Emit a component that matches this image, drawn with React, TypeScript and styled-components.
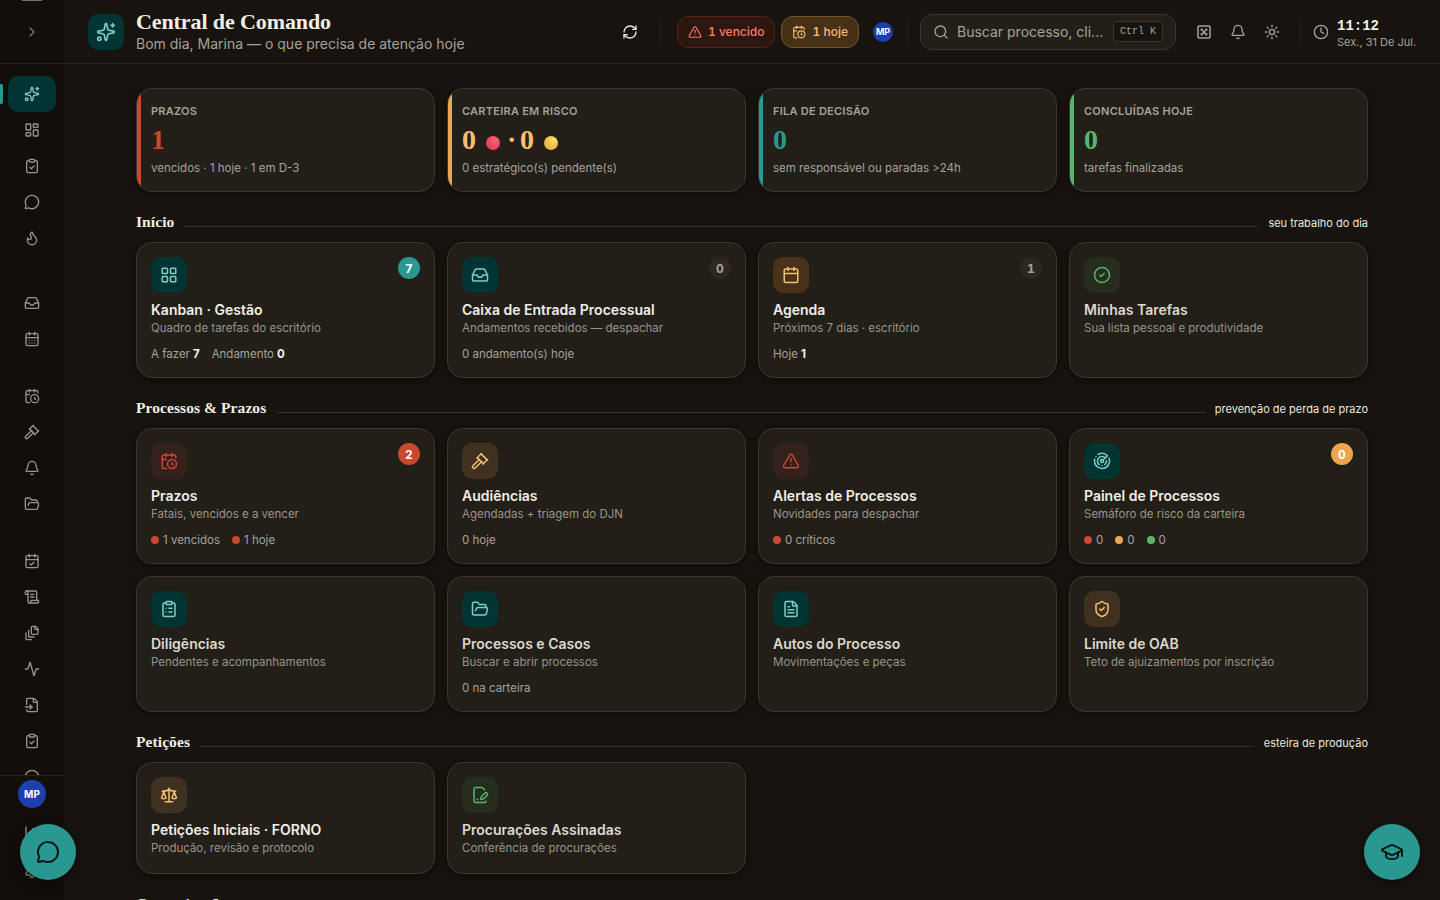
import React from 'react';
import styled, { createGlobalStyle } from 'styled-components';
import {
  Activity, Bell, Calendar, CalendarCheck, CalendarClock, CalendarDays, ChevronRight, Circle, CircleCheck,
  ClipboardCheck, ClipboardList, Clock, FileInput, FileText, Flame, FolderOpen, Gavel,
  GraduationCap, Inbox, LayoutDashboard, LayoutGrid, MessageCircle, Radar, RefreshCw, Scale, ScrollText,
  Search, ShieldCheck, Sparkles, Sun, TriangleAlert, ChartColumn, Settings, type LucideIcon,
} from 'lucide-react';

const GlobalStyle = createGlobalStyle`
  *, *::before, *::after { box-sizing: border-box; }
  html, body { margin: 0; height: 100%; overflow: hidden; background: #17130e; }
  body { font-family: Inter, "Liberation Sans", sans-serif; color: #ece8df; }
  button { font: inherit; color: inherit; border: 0; background: none; padding: 0; }
  svg { display: block; flex: none; }
`;

const serif = '"Liberation Serif", "Times New Roman", serif';
const mono = '"Liberation Mono", monospace';

type Tone = 'teal' | 'amber' | 'bronze' | 'red' | 'green';

const tones: Record<Tone, { bg: string; fg: string }> = {
  teal: { bg: '#023431', fg: '#7fcdc3' },
  amber: { bg: '#4a3218', fg: '#f3c078' },
  bronze: { bg: '#3f3020', fg: '#f3c078' },
  red: { bg: '#35211b', fg: '#cf4632' },
  green: { bg: '#262d1f', fg: '#57b56d' },
};

const Shell = styled.div`
  display: flex;
  height: 900px;
  overflow: hidden;
`;

const Sidebar = styled.aside`
  width: 64px;
  flex: none;
  display: flex;
  flex-direction: column;
  background: #120e09;
`;

const Collapse = styled.button`
  position: relative;
  height: 64px;
  flex: none;
  display: flex;
  align-items: center;
  justify-content: center;
  color: #807b72;
  border-bottom: 1px solid #272420;

  &::before {
    content: '';
    position: absolute;
    top: 0;
    left: 22px;
    width: 20px;
    height: 1px;
    background: #78736a;
  }
`;

const Nav = styled.nav`
  flex: 1;
  min-height: 0;
  overflow: hidden;
  padding: 12px 8px 0;
`;

const NavGroup = styled.div<{ $gap: number }>`
  padding-top: ${(p) => p.$gap}px;
`;

const NavItem = styled.a<{ $active?: boolean }>`
  position: relative;
  display: flex;
  align-items: center;
  justify-content: center;
  height: 36px;
  border-radius: 10px;
  background: ${(p) => (p.$active ? '#023431' : 'transparent')};
  color: ${(p) => (p.$active ? '#7fcdc3' : '#99948a')};

  &::before {
    content: '';
    display: ${(p) => (p.$active ? 'block' : 'none')};
    position: absolute;
    left: -8px;
    top: 8px;
    width: 3px;
    height: 20px;
    border-radius: 0 2px 2px 0;
    background: #2a9790;
  }
`;

const SideFoot = styled.div`
  height: 125px;
  flex: none;
  display: flex;
  flex-direction: column;
  align-items: center;
  padding-top: 4px;
  border-top: 1px solid #272420;
  color: #99948a;
`;

const FootIcon = styled.span`
  height: 38px;
  display: flex;
  align-items: center;
  &:first-of-type { margin-top: 6px; }
`;

const Avatar = styled.div<{ $size: number }>`
  display: flex;
  align-items: center;
  justify-content: center;
  flex: none;
  width: ${(p) => p.$size}px;
  height: ${(p) => p.$size}px;
  border-radius: 50%;
  background: #1f3fae;
  color: #fff;
  font-size: ${(p) => (p.$size > 24 ? 10 : 9)}px;
  font-weight: 700;
`;

const Page = styled.div`
  flex: 1;
  min-width: 0;
  display: flex;
  flex-direction: column;
  background: #17130e;
`;

const Header = styled.header`
  height: 64px;
  flex: none;
  display: flex;
  align-items: center;
  padding: 0 24px;
  border-bottom: 1px solid #272420;
`;

const IconTile = styled.div<{ $tone: Tone }>`
  width: 36px;
  height: 36px;
  flex: none;
  display: flex;
  align-items: center;
  justify-content: center;
  border-radius: 10px;
  background: ${(p) => tones[p.$tone].bg};
  color: ${(p) => tones[p.$tone].fg};
`;

const Heading = styled.div`
  flex: 1;
  margin-left: 12px;
  padding-top: 2px;
  white-space: nowrap;
`;

const Title = styled.h1`
  margin: 0;
  font: 700 22px/22px ${serif};
  letter-spacing: -0.1px;
  color: #f2eee6;
`;

const Greeting = styled.p`
  margin: 0;
  padding-top: 1px;
  font-size: 14px;
  line-height: 20px;
  color: #a8a296;
`;

const Divider = styled.span`
  width: 1px;
  height: 24px;
  background: #272420;
`;

const Refresh = styled.button`
  display: flex;
  margin-right: 22px;
`;

const Alert = styled.div<{ $kind: 'late' | 'today' }>`
  display: flex;
  align-items: center;
  gap: 6px;
  height: 32px;
  padding: 0 10px;
  border-radius: 12px;
  font-size: 12px;
  font-weight: 500;
  border: 1px solid ${(p) => (p.$kind === 'late' ? '#5c2219' : '#775427')};
  background: ${(p) => (p.$kind === 'late' ? '#2c1610' : '#473116')};
  color: ${(p) => (p.$kind === 'late' ? '#fb7a61' : '#ecbb76')};
  b { font-weight: 600; font-variant-numeric: tabular-nums; }
`;

const Alerts = styled.div`
  display: flex;
  gap: 6px;
  margin: 0 14px 0 16px;
`;

const Account = styled.div`
  margin-right: 14px;
`;

const SearchBox = styled.div`
  display: flex;
  align-items: center;
  width: 256px;
  height: 36px;
  margin: 0 20px 0 12px;
  padding: 0 12px;
  border: 1px solid #3a3731;
  border-radius: 12px;
  background: #221f19;
  color: #a8a296;
  font-size: 14px;
  span { flex: 1; margin-left: 8px; white-space: nowrap; }
`;

const Key = styled.kbd`
  display: flex;
  align-items: center;
  justify-content: center;
  width: 50px;
  height: 21px;
  border: 1px solid #3a3731;
  border-radius: 4px;
  background: #17130e;
  font: 500 10px/1 ${mono};
`;

const Tools = styled.div`
  display: flex;
  gap: 18px;
  margin-right: 20px;
  color: #a8a296;
`;

const ClockBox = styled.div`
  display: flex;
  align-items: center;
  gap: 8px;
  margin-left: 12px;
  color: #a8a296;
  font-size: 11px;
  line-height: 14px;
`;

const Time = styled.div`
  padding: 4px 0 1px;
  font: 700 14px/16px ${mono};
  color: #f5f2ea;
`;

const DateText = styled.div`
  width: 79px;
  white-space: nowrap;
`;

const Content = styled.main`
  flex: 1;
  min-height: 0;
  overflow: hidden;
  padding: 24px 72px 0;
`;

const Grid = styled.div`
  display: grid;
  grid-template-columns: repeat(4, 1fr);
  gap: 12px;
`;

const Panel = styled.article`
  position: relative;
  padding: 14px;
  border: 1px solid #3a3731;
  border-radius: 16px;
  background: #221f19;
  box-shadow: 0 2px 8px rgba(0, 0, 0, 0.45);
`;

const Kpi = styled(Panel)<{ $color: string }>`
  height: 104px;
  overflow: hidden;
  padding-top: 15px;

  &::before {
    content: '';
    position: absolute;
    inset: 0 auto 0 0;
    width: 4px;
    background: ${(p) => p.$color};
  }
`;

const KpiLabel = styled.div`
  font-size: 11px;
  line-height: 14px;
  font-weight: 600;
  letter-spacing: 0.25px;
  color: #a8a296;
`;

const KpiValue = styled.div<{ $color: string }>`
  display: flex;
  align-items: baseline;
  height: 30px;
  margin-top: 5px;
  font: 700 28px/34px ${serif};
  white-space: pre;
  color: ${(p) => p.$color};
`;

const KpiNote = styled.div`
  margin-top: 7px;
  font-size: 11.5px;
  line-height: 17px;
  color: #a8a296;
`;

const Orb = styled.i<{ $from: string; $to: string }>`
  width: 14px;
  height: 14px;
  margin: 0 7px 0 10px;
  transform: translateY(1px);
  border-radius: 50%;
  background: radial-gradient(circle at 68% 28%, ${(p) => p.$from}, ${(p) => p.$to});
`;

const Separator = styled.span`
  width: 13px;
`;

const SectionHead = styled.div`
  display: flex;
  align-items: baseline;
  gap: 10px;
  height: 18px;
  margin: 19px 0 13px;
`;

const SectionTitle = styled.h2`
  margin: 0;
  font: 700 15.5px/22px ${serif};
  letter-spacing: 0.08px;
  color: #f2eee6;
`;

const Rule = styled.span`
  flex: 1;
  height: 1px;
  background: #33302a;
`;

const SectionNote = styled.span`
  font-size: 11px;
  color: #ece8df;
`;

const Card = styled(Panel)<{ $h: number; $dim?: boolean }>`
  height: ${(p) => p.$h}px;
  color: ${(p) => (p.$dim ? '#dcd8cf' : '#f2eee6')};
`;

const CardTitle = styled.h3`
  margin: 8px 0 0;
  font-size: 14px;
  line-height: 18px;
  font-weight: 600;
`;

const CardText = styled.p`
  margin: 0;
  font-size: 11.5px;
  line-height: 18px;
  color: #9a9488;
`;

const Stats = styled.div`
  display: flex;
  gap: 12px;
  margin-top: 8px;
  font-size: 11.5px;
  line-height: 18px;
  color: #a8a296;
`;

const Stat = styled.span`
  display: flex;
  align-items: center;
  b { margin-left: 3px; font-weight: 700; color: #f5f2ea; }
`;

const Dot = styled.i<{ $color: string }>`
  width: 8px;
  height: 8px;
  margin-right: 4px;
  border-radius: 50%;
  background: ${(p) => p.$color};
`;

const Badge = styled.span<{ $bg: string; $fg: string }>`
  position: absolute;
  top: 14px;
  right: 14px;
  width: 22px;
  height: 22px;
  border-radius: 11px;
  display: flex;
  align-items: center;
  justify-content: center;
  font-size: 12px;
  font-weight: 700;
  font-variant-numeric: tabular-nums;
  background: ${(p) => p.$bg};
  color: ${(p) => p.$fg};
`;

const Fab = styled.button<{ $side: 'left' | 'right' }>`
  position: fixed;
  bottom: 20px;
  ${(p) => p.$side}: 20px;
  width: 56px;
  height: 56px;
  border-radius: 50%;
  display: flex;
  align-items: center;
  justify-content: center;
  background: #2a9790;
  color: #0d1513;
  box-shadow: 0 4px 12px rgba(0, 0, 0, 0.4);
`;

const RED = '#cb4730';
const AMBER = '#eea64e';
const GREEN = '#57b56d';
const TEAL = '#2a9790';

type GlyphProps = { size?: number; strokeWidth?: number };

const Fullscreen = ({ size = 16 }: GlyphProps) => (
  <svg width={size} height={size} viewBox="0 0 16 16" fill="none" stroke="currentColor" strokeWidth="1.5" strokeLinecap="round" strokeLinejoin="round">
    <rect x="2" y="2" width="12" height="12" rx="1" />
    <path strokeWidth="1.4" d="m5.6 5.6 4.8 4.8M10.4 5.6l-4.8 4.8" />
    <path strokeWidth="0.9" d="M5 6.4V5h1.4M9.6 5H11v1.4M11 9.6V11H9.6M6.4 11H5V9.6" />
  </svg>
);

const Documents = ({ size = 16, strokeWidth = 2 }: GlyphProps) => (
  <svg width={size} height={size} viewBox="0 0 24 24" fill="none" stroke="currentColor" strokeWidth={strokeWidth} strokeLinecap="round" strokeLinejoin="round">
    <path d="M21 7h-3a2 2 0 0 1-2-2V2" />
    <path d="M21 6v6.5c0 .8-.7 1.5-1.5 1.5h-7c-.8 0-1.5-.7-1.5-1.5v-9c0-.8.7-1.5 1.5-1.5H17Z" />
    <path d="M7 8v8.8c0 .3.2.6.4.8.2.2.5.4.8.4H15" />
    <path d="M3 12v8.8c0 .3.2.6.4.8.2.2.5.4.8.4H11" />
  </svg>
);

const Signed = ({ size = 18 }: GlyphProps) => (
  <svg width={size} height={size} viewBox="0 0 24 24" fill="none" stroke="currentColor" strokeWidth="2" strokeLinecap="round" strokeLinejoin="round">
    <path d="m18 5-2.414-2.414A2 2 0 0 0 14.172 2H6a2 2 0 0 0-2 2v16a2 2 0 0 0 2 2h12a2 2 0 0 0 2-2" />
    <path d="M21.378 12.626a1 1 0 0 0-3.004-3.004l-4.01 4.012a2 2 0 0 0-.506.854l-.837 2.87a.5.5 0 0 0 .62.62l2.87-.837a2 2 0 0 0 .854-.506z" />
    <path d="M8 18h1" />
  </svg>
);

type Glyph = LucideIcon | React.FC<GlyphProps>;
type StatData = { label?: string; value?: string; dot?: string };
type CardData = {
  icon: Glyph; tone: Tone; title: string; text: string;
  stats?: StatData[]; badge?: { n: number; bg: string; fg: string }; dim?: boolean;
};

const muted = { bg: '#2b2823', fg: '#a8a296' };

const sections: { title: string; note: string; h: number; cards: CardData[] }[] = [
  {
    title: 'Início', note: 'seu trabalho do dia', h: 136,
    cards: [
      { icon: LayoutGrid, tone: 'teal', title: 'Kanban · Gestão', text: 'Quadro de tarefas do escritório', stats: [{ label: 'A fazer', value: '7' }, { label: 'Andamento', value: '0' }], badge: { n: 7, bg: TEAL, fg: '#fff' } },
      { icon: Inbox, tone: 'teal', title: 'Caixa de Entrada Processual', text: 'Andamentos recebidos — despachar', stats: [{ label: '0 andamento(s) hoje' }], badge: { n: 0, ...muted } },
      { icon: Calendar, tone: 'amber', title: 'Agenda', text: 'Próximos 7 dias · escritório', stats: [{ label: 'Hoje', value: '1' }], badge: { n: 1, ...muted } },
      { icon: CircleCheck, tone: 'green', title: 'Minhas Tarefas', text: 'Sua lista pessoal e produtividade', dim: true },
    ],
  },
  {
    title: 'Processos & Prazos', note: 'prevenção de perda de prazo', h: 136,
    cards: [
      { icon: CalendarClock, tone: 'red', title: 'Prazos', text: 'Fatais, vencidos e a vencer', stats: [{ dot: RED, label: '1 vencidos' }, { dot: RED, label: '1 hoje' }], badge: { n: 2, bg: RED, fg: '#fff' } },
      { icon: Gavel, tone: 'bronze', title: 'Audiências', text: 'Agendadas + triagem do DJN', stats: [{ label: '0 hoje' }] },
      { icon: TriangleAlert, tone: 'red', title: 'Alertas de Processos', text: 'Novidades para despachar', stats: [{ dot: RED, label: '0 críticos' }] },
      { icon: Radar, tone: 'teal', title: 'Painel de Processos', text: 'Semáforo de risco da carteira', stats: [{ dot: RED, label: '0' }, { dot: AMBER, label: '0' }, { dot: GREEN, label: '0' }], badge: { n: 0, bg: AMBER, fg: '#fff' } },
      { icon: ClipboardList, tone: 'teal', title: 'Diligências', text: 'Pendentes e acompanhamentos', dim: true },
      { icon: FolderOpen, tone: 'teal', title: 'Processos e Casos', text: 'Buscar e abrir processos', stats: [{ label: '0 na carteira' }], dim: true },
      { icon: FileText, tone: 'teal', title: 'Autos do Processo', text: 'Movimentações e peças', dim: true },
      { icon: ShieldCheck, tone: 'bronze', title: 'Limite de OAB', text: 'Teto de ajuizamentos por inscrição', dim: true },
    ],
  },
  {
    title: 'Petições', note: 'esteira de produção', h: 112,
    cards: [
      { icon: Scale, tone: 'bronze', title: 'Petições Iniciais · FORNO', text: 'Produção, revisão e protocolo' },
      { icon: Signed, tone: 'green', title: 'Procurações Assinadas', text: 'Conferência de procurações', dim: true },
    ],
  },
  { title: 'Comunicação', note: '', h: 112, cards: [] },
];

const navGroups: { gap: number; items: Glyph[] }[] = [
  { gap: 0, items: [Sparkles, LayoutDashboard, ClipboardCheck, MessageCircle, Flame] },
  { gap: 29, items: [Inbox, CalendarDays] },
  { gap: 21, items: [CalendarClock, Gavel, Bell, FolderOpen] },
  { gap: 21, items: [CalendarCheck, ScrollText, Documents, Activity, FileInput, ClipboardCheck, Circle] },
];

export default function App() {
  return (
    <>
      <GlobalStyle />
      <Shell>
        <Sidebar>
          <Collapse aria-label="Expandir menu"><ChevronRight size={16} /></Collapse>
          <Nav>
            {navGroups.map((group, g) => (
              <NavGroup key={g} $gap={group.gap}>
                {group.items.map((Icon, i) => (
                  <NavItem key={i} $active={g === 0 && i === 0}><Icon size={16} strokeWidth={2} /></NavItem>
                ))}
              </NavGroup>
            ))}
          </Nav>
          <SideFoot>
            <Avatar $size={28}>MP</Avatar>
            <FootIcon><ChartColumn size={16} /></FootIcon>
            <FootIcon><Settings size={16} /></FootIcon>
          </SideFoot>
        </Sidebar>
        <Page>
          <Header>
            <IconTile $tone="teal"><Sparkles size={20} /></IconTile>
            <Heading>
              <Title>Central de Comando</Title>
              <Greeting>Bom dia, Marina — o que precisa de atenção hoje</Greeting>
            </Heading>
            <Refresh aria-label="Atualizar"><RefreshCw size={16} /></Refresh>
            <Divider />
            <Alerts>
              <Alert $kind="late"><TriangleAlert size={14} /><span><b>1</b> vencido</span></Alert>
              <Alert $kind="today"><CalendarClock size={14} /><span><b>1</b> hoje</span></Alert>
            </Alerts>
            <Account><Avatar $size={20}>MP</Avatar></Account>
            <Divider />
            <SearchBox><Search size={16} /><span>Buscar processo, cli...</span><Key>Ctrl K</Key></SearchBox>
            <Tools><Fullscreen /><Bell size={16} /><Sun size={16} /></Tools>
            <Divider />
            <ClockBox>
              <Clock size={16} />
              <div>
                <Time>11:12</Time>
                <DateText>Sex., 31 De Jul.</DateText>
              </div>
            </ClockBox>
          </Header>
          <Content>
            <Grid>
              <Kpi $color={RED}>
                <KpiLabel>PRAZOS</KpiLabel>
                <KpiValue $color={RED}>1</KpiValue>
                <KpiNote>vencidos · 1 hoje · 1 em D-3</KpiNote>
              </Kpi>
              <Kpi $color={AMBER}>
                <KpiLabel>CARTEIRA EM RISCO</KpiLabel>
                <KpiValue $color="#f9be70">
                  0<Orb $from="#ff6079" $to="#d5344f" />
                  <Separator>·</Separator>
                  0<Orb $from="#ffe35a" $to="#d8a03c" />
                </KpiValue>
                <KpiNote>0 estratégico(s) pendente(s)</KpiNote>
              </Kpi>
              <Kpi $color={TEAL}>
                <KpiLabel>FILA DE DECISÃO</KpiLabel>
                <KpiValue $color={TEAL}>0</KpiValue>
                <KpiNote>sem responsável ou paradas &gt;24h</KpiNote>
              </Kpi>
              <Kpi $color={GREEN}>
                <KpiLabel>CONCLUÍDAS HOJE</KpiLabel>
                <KpiValue $color={GREEN}>0</KpiValue>
                <KpiNote>tarefas finalizadas</KpiNote>
              </Kpi>
            </Grid>
            {sections.map((section) => (
              <section key={section.title}>
                <SectionHead>
                  <SectionTitle>{section.title}</SectionTitle>
                  <Rule />
                  <SectionNote>{section.note}</SectionNote>
                </SectionHead>
                <Grid>
                  {section.cards.map((card) => (
                    <Card key={card.title} $h={section.h} $dim={card.dim}>
                      <IconTile $tone={card.tone}><card.icon size={18} /></IconTile>
                      {card.badge && <Badge $bg={card.badge.bg} $fg={card.badge.fg}>{card.badge.n}</Badge>}
                      <CardTitle>{card.title}</CardTitle>
                      <CardText>{card.text}</CardText>
                      {card.stats && (
                        <Stats>
                          {card.stats.map((s, i) => (
                            <Stat key={i}>
                              {s.dot && <Dot $color={s.dot} />}
                              {s.label}
                              {s.value && <b>{s.value}</b>}
                            </Stat>
                          ))}
                        </Stats>
                      )}
                    </Card>
                  ))}
                </Grid>
              </section>
            ))}
          </Content>
        </Page>
      </Shell>
      <Fab $side="left" aria-label="Conversas"><MessageCircle size={24} /></Fab>
      <Fab $side="right" aria-label="Aprender"><GraduationCap size={24} /></Fab>
    </>
  );
}
